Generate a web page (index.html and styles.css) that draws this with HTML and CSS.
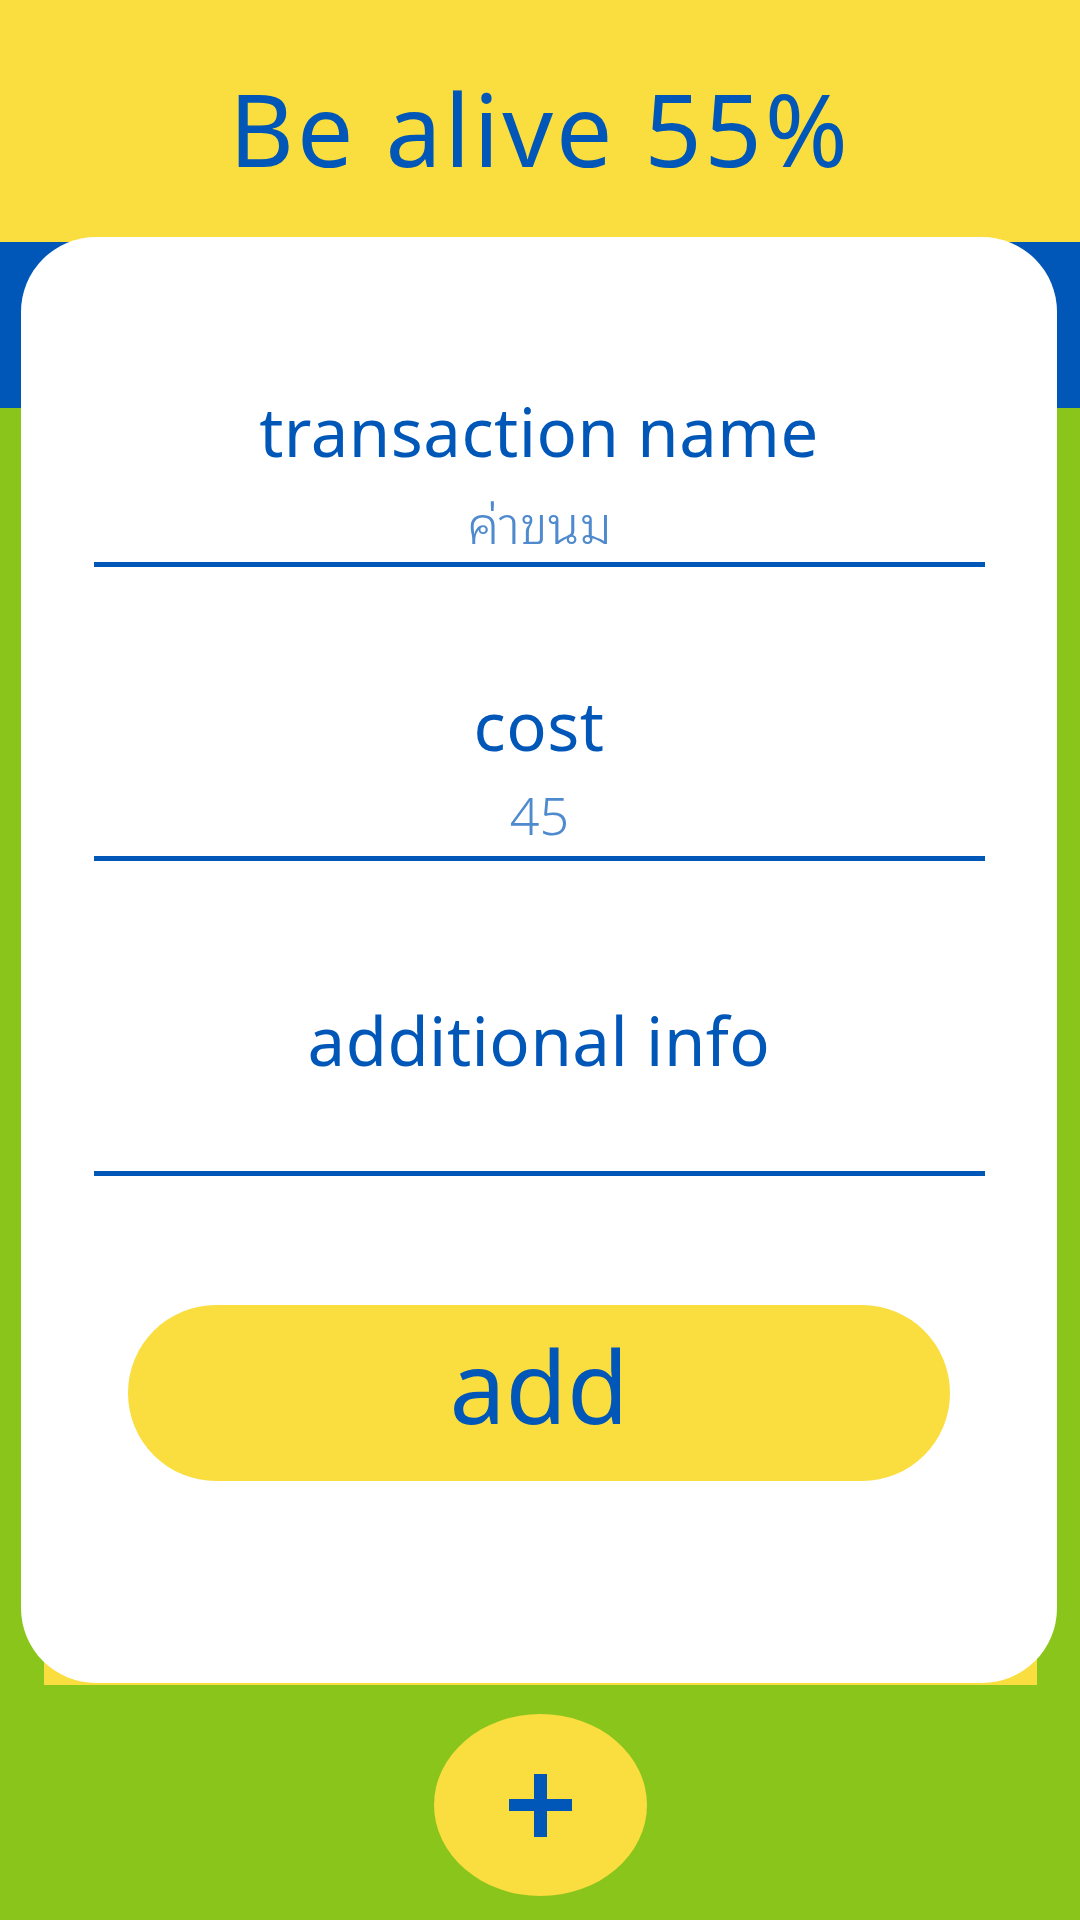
FILE: index.html
```html
<!DOCTYPE html>
<html lang="th">
<head>
<meta charset="utf-8">
<title>Be alive 55%</title>
<link rel="stylesheet" href="styles.css">
</head>
<body>
  <header class="header">
    <h1 class="title">Be alive 55%</h1>
  </header>
  <main class="card">
    <div class="field field-first">
      <div class="label">transaction name</div>
      <div class="value value-thai">ค่าขนม</div>
    </div>
    <div class="field">
      <div class="label">cost</div>
      <div class="value">45</div>
    </div>
    <div class="field field-last">
      <div class="label">additional info</div>
      <div class="value"></div>
    </div>
    <button class="add-btn">add</button>
  </main>
  <footer class="footer">
    <button class="plus-btn" aria-label="add">
      <svg width="63" height="63" viewBox="0 0 63 63">
        <rect x="0" y="25" width="63" height="12" fill="#0157b8"/>
        <rect x="25" y="0" width="13" height="63" fill="#0157b8"/>
      </svg>
    </button>
  </footer>
</body>
</html>
```
FILE: styles.css
```css
html, body {
  margin: 0;
  padding: 0;
}
body {
  width: 1080px;
  min-height: 1920px;
  font-family: "Noto Sans", "Noto Sans Thai Looped", "Loma", "Garuda", "Noto Sans Thai", sans-serif;
  color: #0157b8;
  background: linear-gradient(to bottom, #fadd3f 0, #fadd3f 242px, #0157b8 242px, #0157b8 408px, #8ac51c 408px);
}
.header {
  height: 237px;
  box-sizing: border-box;
  padding-top: 60px;
  text-align: center;
}
.title {
  margin: 0;
  font-size: 100px;
  font-weight: 400;
  letter-spacing: 3px;
  line-height: normal;
  color: #0157b8;
}
.card {
  position: relative;
  display: flex;
  flex-direction: column;
  margin: 0 23px 0 21px;
  background: #ffffff;
  border-radius: 75px;
  padding: 154px 0 202px;
}
.card::before {
  content: "";
  position: absolute;
  left: 23px;
  right: 20px;
  top: 50%;
  bottom: -2px;
  background: #fadd3f;
  z-index: -1;
}
.field {
  margin-top: 118px;
  text-align: center;
}
.field-first {
  margin-top: 0;
}
.field-last {
  margin-top: 139px;
}
.label {
  font-size: 67px;
  line-height: 80px;
  font-weight: 400;
  letter-spacing: 0.5px;
  color: #0157b8;
}
.value {
  margin: 20px 72px 0 73px;
  height: 60px;
  padding-bottom: 11px;
  border-bottom: 5px solid #0157b8;
  font-size: 52px;
  line-height: 60px;
  font-weight: 300;
  color: #4e8acd;
}
.value-thai {
  font-family: "Noto Sans Thai Looped", "Loma", "Garuda", "Noto Sans Thai", sans-serif;
}
.add-btn {
  align-self: center;
  margin-top: 129px;
  width: 822px;
  height: 176px;
  box-sizing: border-box;
  padding: 0 0 16px;
  border: none;
  border-radius: 88px;
  background: #fadd3f;
  color: #0157b8;
  font-family: "Noto Sans", sans-serif;
  font-size: 100px;
  font-weight: 400;
  line-height: 160px;
}
.footer {
  display: flex;
  justify-content: center;
  padding-top: 31px;
}
.plus-btn {
  display: flex;
  align-items: center;
  justify-content: center;
  width: 213px;
  height: 182px;
  margin-left: 1px;
  padding: 0;
  border: none;
  border-radius: 50%;
  background: #fadd3f;
}
.plus-btn svg {
  display: block;
}
```
